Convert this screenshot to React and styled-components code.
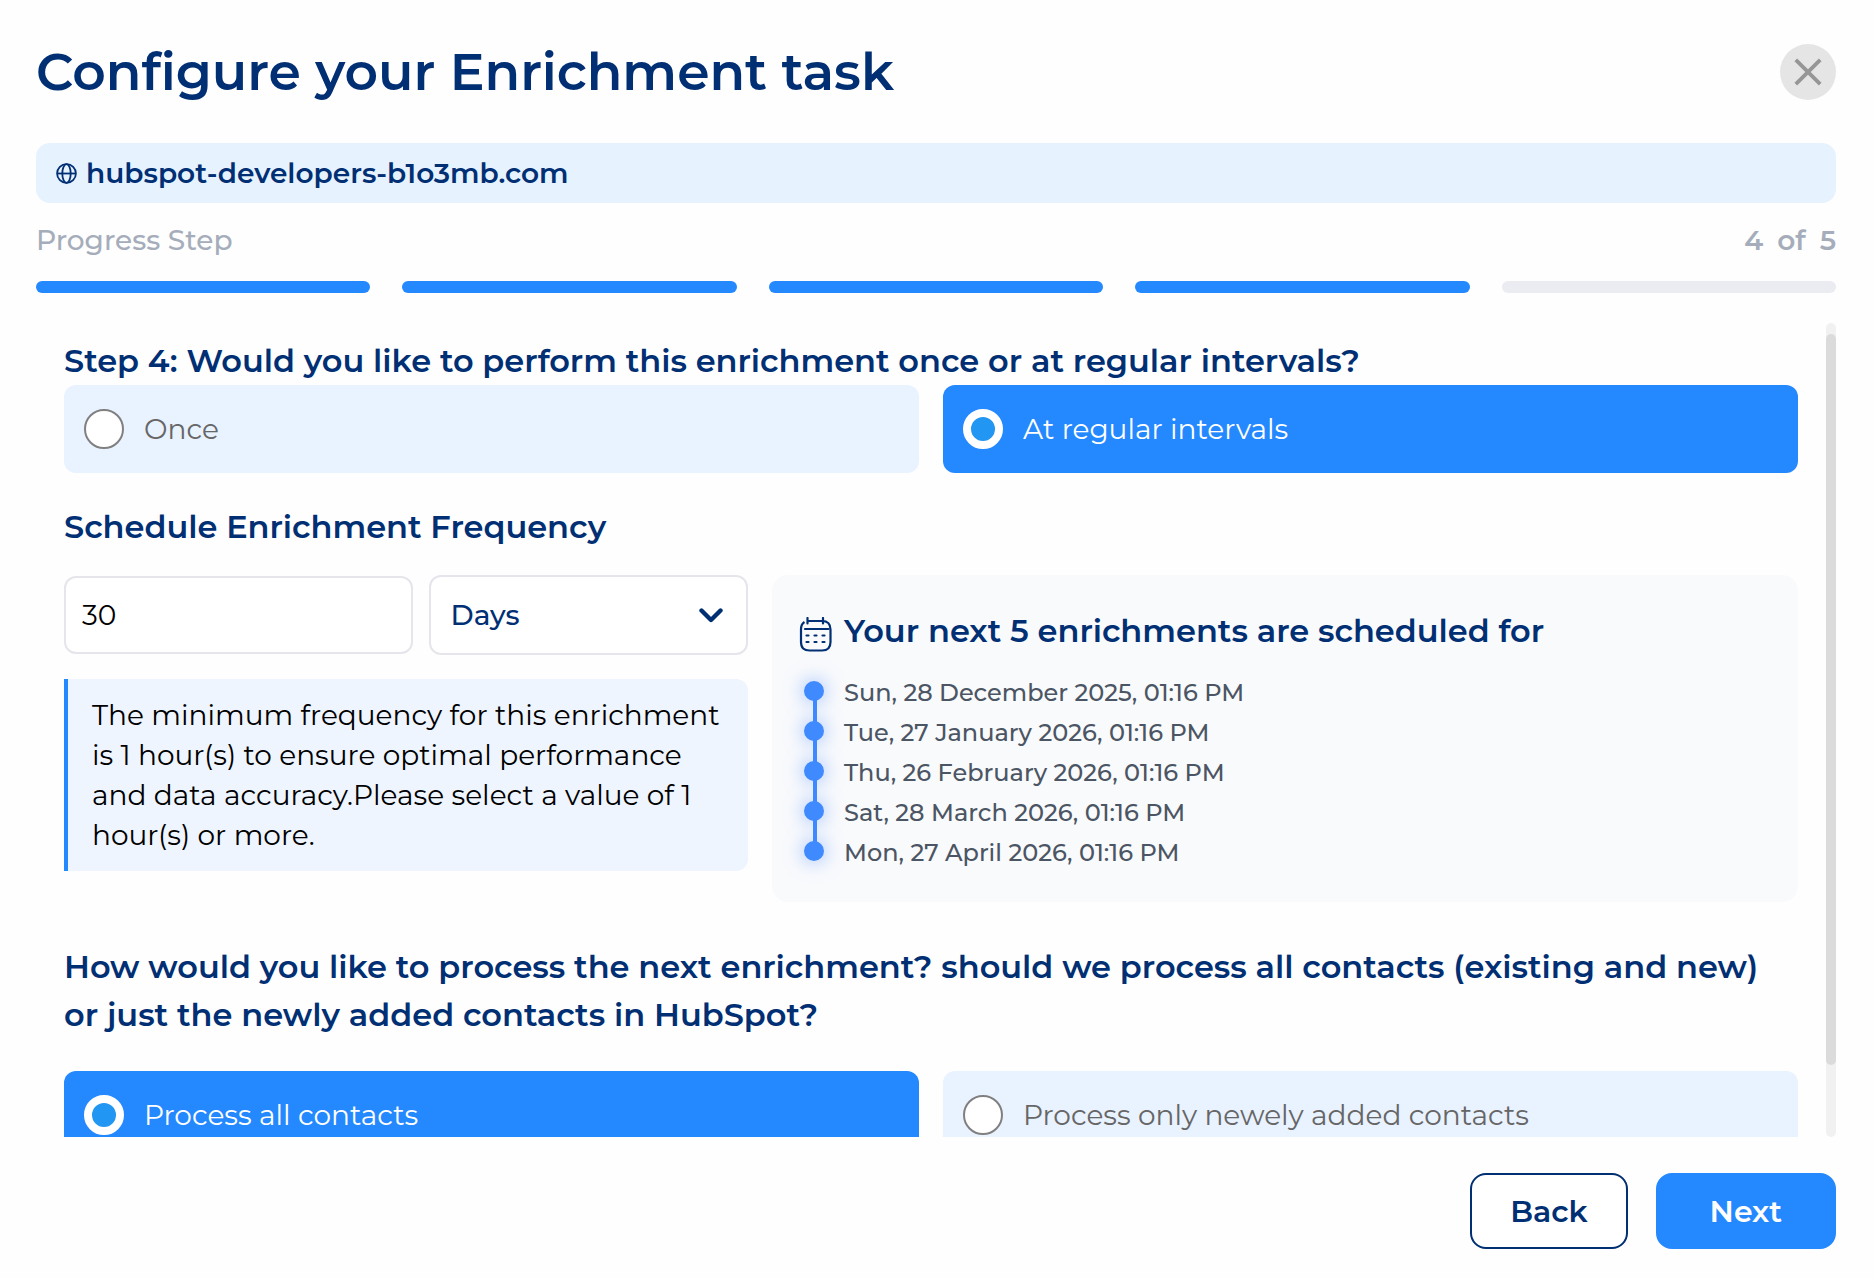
import React, { useLayoutEffect, useRef, useState } from "react";
import styled, { createGlobalStyle } from "styled-components";

const GlobalStyle = createGlobalStyle`
  * {
    box-sizing: border-box;
  }
  body {
    margin: 0;
    background-color: #fefefe;
    font-family: "Montserrat", "Inter", sans-serif;
  }
`;

// Styled components
const Dialog = styled.main`
  display: flex;
  flex-direction: column;
  height: 100vh;
  padding: 44px 38px 29px 36px;
  color: #002f73;
`;

const Header = styled.header`
  display: flex;
  align-items: center;
  justify-content: space-between;
  margin-bottom: 43px;
`;

const Title = styled.h1`
  margin: 0;
  font-size: 52px;
  line-height: 56px;
  font-weight: 600;
`;

const CloseButton = styled.button`
  display: flex;
  align-items: center;
  justify-content: center;
  width: 56px;
  height: 56px;
  padding: 0;
  border: none;
  border-radius: 50%;
  background-color: #e5e5e5;
  cursor: pointer;
`;

const DomainBar = styled.div`
  display: flex;
  align-items: center;
  gap: 9px;
  padding: 10px 20px;
  border-radius: 14px;
  background-color: #e7f2ff;
  font-size: 28px;
  line-height: 40px;
  font-weight: 600;
`;

const ProgressRow = styled.div`
  display: flex;
  justify-content: space-between;
  margin: 17px 0 21px;
  color: #a5adbb;
  font-size: 28px;
  line-height: 40px;
  font-weight: 500;
`;

const ProgressCount = styled.span`
  display: flex;
  gap: 14px;
  font-weight: 600;
`;

const ProgressBars = styled.div`
  display: flex;
  gap: 32px;
  margin-bottom: 30px;
`;

const ProgressBar = styled.div`
  flex: 1;
  height: 12px;
  border-radius: 6px;
  background-color: ${(props) => (props.$done ? "#2488ff" : "#ebebf2")};
`;

const ScrollFrame = styled.div`
  display: flex;
  flex: 1;
  min-height: 0;
`;

const ScrollArea = styled.div`
  flex: 1;
  overflow-y: auto;
  padding: 26px 28px 58px;
  scrollbar-width: none;
`;

const ScrollTrack = styled.div`
  flex: none;
  width: 10px;
  border-radius: 5px;
  background-color: #f1f1f1;
`;

const ScrollThumb = styled.div`
  border-radius: 5px;
  background-color: #dbdbdb;
`;

const Heading = styled.h2`
  margin: 0;
  font-size: 32px;
  line-height: 48px;
  font-weight: 600;
`;

const FrequencyHeading = styled(Heading)`
  margin: 30px 0 24px;
`;

const ProcessHeading = styled(Heading)`
  margin: 41px 0 32px;
`;

const OptionRow = styled.div`
  display: grid;
  grid-template-columns: 1fr 1fr;
  gap: 24px;
`;

const Option = styled.label`
  display: flex;
  align-items: center;
  gap: 20px;
  height: 88px;
  padding: 0 20px;
  border-radius: 12px;
  background-color: ${(props) => (props.$checked ? "#2488ff" : "#e9f2ff")};
  color: ${(props) => (props.$checked ? "#ffffff" : "#666666")};
  font-size: 28px;
  cursor: pointer;
`;

const Radio = styled.input`
  appearance: none;
  flex: none;
  width: 40px;
  height: 40px;
  margin: 0;
  border: 2px solid #808080;
  border-radius: 50%;
  background-color: #ffffff;
  &:checked {
    border: 8px solid #ffffff;
    background-color: #2196f3;
  }
`;

const ScheduleRow = styled.div`
  display: grid;
  grid-template-columns: 2fr 3fr;
  gap: 24px;
  align-items: start;
`;

const FrequencyFields = styled.div`
  display: grid;
  grid-template-columns: 12fr 11fr;
  gap: 16px;
  align-items: center;
  margin-bottom: 24px;
`;

const AmountInput = styled.input`
  width: 100%;
  height: 78px;
  padding: 0 16px;
  border: 2px solid #e5e5eb;
  border-radius: 12px;
  background-color: #ffffff;
  color: #000000;
  font-family: inherit;
  font-size: 28px;
`;

const SelectWrapper = styled.div`
  display: grid;
  align-items: center;
  & > * {
    grid-area: 1 / 1;
  }
  svg {
    justify-self: end;
    margin-right: 24px;
    pointer-events: none;
  }
`;

const UnitSelect = styled.select`
  appearance: none;
  width: 100%;
  height: 80px;
  padding: 0 20px;
  border: 2px solid #e5e5eb;
  border-radius: 12px;
  background-color: #ffffff;
  color: #002f73;
  font-family: inherit;
  font-size: 28px;
  font-weight: 500;
`;

const Notice = styled.p`
  margin: 0;
  padding: 16px 24px;
  border-left: 4px solid #2488ff;
  border-radius: 0 12px 12px 0;
  background-color: #eef5ff;
  color: #000000;
  font-size: 28px;
  line-height: 40px;
`;

const SchedulePanel = styled.section`
  padding: 32px 26px 29px;
  border-radius: 16px;
  background-color: #f9fafc;
`;

const PanelTitle = styled.div`
  display: flex;
  align-items: flex-end;
  gap: 11px;
  margin-bottom: 18px;
`;

const DateList = styled.ol`
  margin: 0;
  padding: 0;
  list-style: none;
`;

const DateItem = styled.li`
  display: flex;
  gap: 20px;
  padding-left: 6px;
  color: #4b5563;
  font-size: 24px;
  line-height: 40px;
  font-weight: 500;
`;

const Marker = styled.span`
  position: relative;
  width: 20px;
  height: 20px;
  margin-top: 8px;
  border-radius: 50%;
  background-color: #3f8aff;
  box-shadow: 0 0 20px rgba(63, 128, 255, 0.6);
  ${DateItem}:not(:last-child) &::after {
    content: "";
    position: absolute;
    top: 18px;
    left: 9px;
    width: 4px;
    height: 24px;
    background-color: #3f8aff;
  }
`;

const Footer = styled.footer`
  display: flex;
  justify-content: flex-end;
  gap: 28px;
  margin-top: 36px;
`;

const Button = styled.button`
  height: 76px;
  padding: 0 ${(props) => (props.$primary ? "52px" : "38px")};
  border: 2px solid ${(props) => (props.$primary ? "#2488ff" : "#002f73")};
  border-radius: 16px;
  background-color: ${(props) => (props.$primary ? "#2488ff" : "#ffffff")};
  color: ${(props) => (props.$primary ? "#ffffff" : "#002f73")};
  font-family: inherit;
  font-size: 30px;
  font-weight: 600;
  cursor: pointer;
`;

const CloseIcon = () => (
  <svg width="28" height="28" viewBox="0 0 28 28" fill="none" stroke="#969696" strokeWidth="3.8">
    <path d="M1.8 1.8 26.2 26.2M26.2 1.8 1.8 26.2" />
  </svg>
);

const GlobeIcon = () => (
  <svg width="21" height="21" viewBox="0 0 21 21" fill="none" stroke="#002f73" strokeWidth="1.8">
    <circle cx="10.5" cy="10.5" r="9.4" />
    <ellipse cx="10.5" cy="10.5" rx="4.2" ry="9.4" />
    <path d="M1 10.5h19" />
  </svg>
);

const ChevronIcon = () => (
  <svg width="26" height="16" viewBox="0 0 26 16" fill="none" stroke="#002f73" strokeWidth="4.4">
    <path d="m3.5 3.5 9.5 9.5 9.5-9.5" strokeLinecap="round" strokeLinejoin="round" />
  </svg>
);

const CalendarIcon = () => (
  <svg width="35" height="38" viewBox="0 0 35 38" fill="none" stroke="#002f73" strokeWidth="2.2">
    <path d="M9.5 4H24c6 0 8.500 3 8.500 8.500V25c0 6-3 8.500-8.500 8.500H11.500C6 33.500 3 31 3 25V12.500C3 9 4 6.500 6.500 5" />
    <path d="M9.500 1v5.500M25 1v5.500M7 12h23.500" strokeLinecap="round" />
    <path d="M8.500 18.500h2M16.500 18.500h2M24.500 18.500h2M8.500 25h2M16.500 25h2M24.500 25h2" strokeLinecap="round" />
  </svg>
);

const steps = [1, 2, 3, 4, 5];
const currentStep = 4;

const dates = [
  "Sun, 28 December 2025, 01:16 PM",
  "Tue, 27 January 2026, 01:16 PM",
  "Thu, 26 February 2026, 01:16 PM",
  "Sat, 28 March 2026, 01:16 PM",
  "Mon, 27 April 2026, 01:16 PM",
];

const intervalOptions = [
  { value: "once", label: "Once" },
  { value: "regular", label: "At regular intervals" },
];

const processOptions = [
  { value: "all", label: "Process all contacts" },
  { value: "new", label: "Process only newely added contacts" },
];

function RadioOptions({ name, label, options, value, onChange }) {
  return (
    <OptionRow role="radiogroup" aria-label={label}>
      {options.map((option) => (
        <Option key={option.value} $checked={option.value === value}>
          <Radio
            type="radio"
            name={name}
            value={option.value}
            checked={option.value === value}
            onChange={() => onChange(option.value)}
          />
          {option.label}
        </Option>
      ))}
    </OptionRow>
  );
}

function ScrollPanel({ children }) {
  const areaRef = useRef(null);
  const [thumb, setThumb] = useState({ height: 0, offset: 0 });

  const updateThumb = () => {
    const { clientHeight, scrollHeight, scrollTop } = areaRef.current;
    const ratio = clientHeight / scrollHeight;
    setThumb({
      height: Math.round(clientHeight * ratio),
      offset: Math.round(scrollTop * ratio),
    });
  };

  useLayoutEffect(() => {
    areaRef.current.scrollTop = 12;
    updateThumb();
    window.addEventListener("resize", updateThumb);
    return () => window.removeEventListener("resize", updateThumb);
  }, []);

  return (
    <ScrollFrame>
      <ScrollArea ref={areaRef} onScroll={updateThumb}>
        {children}
      </ScrollArea>
      <ScrollTrack>
        <ScrollThumb
          style={{ height: thumb.height, transform: `translateY(${thumb.offset}px)` }}
        />
      </ScrollTrack>
    </ScrollFrame>
  );
}

function App() {
  const [interval, setInterval] = useState("regular");
  const [process, setProcess] = useState("all");
  const [amount, setAmount] = useState("30");
  const [unit, setUnit] = useState("Days");

  return (
    <Dialog>
      <GlobalStyle />
      <Header>
        <Title>Configure your Enrichment task</Title>
        <CloseButton type="button" aria-label="Close">
          <CloseIcon />
        </CloseButton>
      </Header>
      <DomainBar>
        <GlobeIcon />
        hubspot-developers-b1o3mb.com
      </DomainBar>
      <ProgressRow>
        <span>Progress Step</span>
        <ProgressCount>
          <span>{currentStep}</span>
          <span>of</span>
          <span>{steps.length}</span>
        </ProgressCount>
      </ProgressRow>
      <ProgressBars>
        {steps.map((step) => (
          <ProgressBar key={step} $done={step <= currentStep} />
        ))}
      </ProgressBars>

      <ScrollPanel>
        <Heading>
          Step 4: Would you like to perform this enrichment once or at regular intervals?
        </Heading>
        <RadioOptions
          name="interval"
          label="Enrichment interval"
          options={intervalOptions}
          value={interval}
          onChange={setInterval}
        />

        <FrequencyHeading>Schedule Enrichment Frequency</FrequencyHeading>
        <ScheduleRow>
          <div>
            <FrequencyFields>
              <AmountInput
                aria-label="Frequency"
                value={amount}
                onChange={(e) => setAmount(e.target.value)}
              />
              <SelectWrapper>
                <UnitSelect
                  aria-label="Frequency unit"
                  value={unit}
                  onChange={(e) => setUnit(e.target.value)}
                >
                  <option>Hours</option>
                  <option>Days</option>
                  <option>Weeks</option>
                </UnitSelect>
                <ChevronIcon />
              </SelectWrapper>
            </FrequencyFields>
            <Notice>
              The minimum frequency for this enrichment is 1 hour(s) to ensure optimal
              performance and data accuracy.Please select a value of 1 hour(s) or more.
            </Notice>
          </div>
          <SchedulePanel>
            <PanelTitle>
              <CalendarIcon />
              <Heading as="h3">Your next 5 enrichments are scheduled for</Heading>
            </PanelTitle>
            <DateList>
              {dates.map((date) => (
                <DateItem key={date}>
                  <Marker />
                  {date}
                </DateItem>
              ))}
            </DateList>
          </SchedulePanel>
        </ScheduleRow>

        <ProcessHeading>
          How would you like to process the next enrichment? should we process all contacts
          (existing and new) or just the newly added contacts in HubSpot?
        </ProcessHeading>
        <RadioOptions
          name="process"
          label="Contacts to process"
          options={processOptions}
          value={process}
          onChange={setProcess}
        />
      </ScrollPanel>

      <Footer>
        <Button type="button">Back</Button>
        <Button type="button" $primary>
          Next
        </Button>
      </Footer>
    </Dialog>
  );
}

export default App;
